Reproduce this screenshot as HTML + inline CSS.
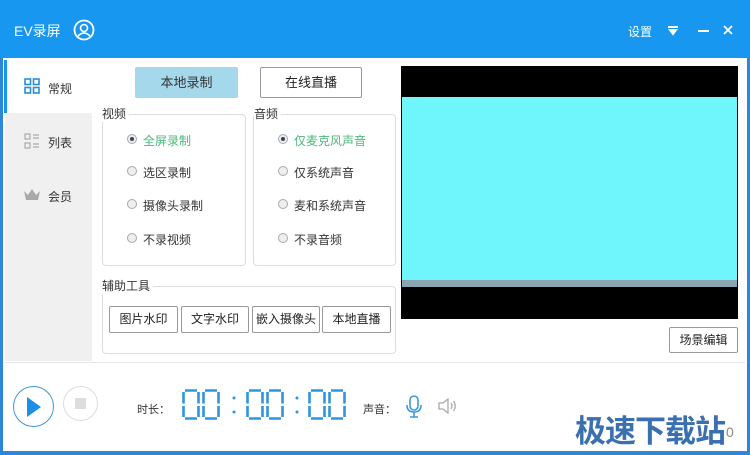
<!DOCTYPE html>
<html><head><meta charset="utf-8"><style>
*{margin:0;padding:0;box-sizing:border-box}
body{width:750px;height:455px;overflow:hidden;background:#2d86d8;font-family:"Liberation Sans","Noto Sans CJK SC",sans-serif;font-size:12px;color:#333;position:relative}
.a{position:absolute}
#win{left:3px;top:0;width:744px;height:451px;background:#fff}
#title{left:0;top:0;width:750px;height:58px;background:#1797ef}
.btn{position:absolute;border:1px solid #999;border-radius:2px;background:#fff;text-align:center;font-size:12px;color:#222}
.box{position:absolute;border:1px solid #ddd;border-radius:4px}
.r{position:absolute;width:10px;height:10px;border-radius:50%;border:1px solid #aaa;background:#eee}
.r.on::after{content:"";position:absolute;left:2px;top:2px;width:4px;height:4px;border-radius:50%;background:#345}
.lab{position:absolute;font-size:12px;color:#333}
</style></head><body>
<div class="a" id="win"></div>
<div class="a" id="title"></div>
<div class="a" style="left:14px;top:21px;color:#fff;font-size:14px">EV录屏</div>
<svg class="a" style="left:73px;top:19px" width="22" height="22" viewBox="0 0 22 22"><circle cx="11" cy="11" r="9.5" fill="none" stroke="#fff" stroke-width="1.8"/><circle cx="11" cy="9" r="3.5" fill="none" stroke="#fff" stroke-width="1.6"/><path d="M5 17 Q11 11 17 17" fill="none" stroke="#fff" stroke-width="1.6"/></svg>
<div class="a" style="left:628px;top:23px;color:#fff;font-size:12px">设置</div>
<svg class="a" style="left:667px;top:25px" width="12" height="12"><path d="M1 2h10M3 5h6l-3 4z" stroke="#fff" stroke-width="2" fill="#fff"/></svg>
<div class="a" style="left:698px;top:30px;width:11px;height:2px;background:#fff"></div>
<svg class="a" style="left:723px;top:25px" width="10" height="10"><path d="M1 1L9 9M9 1L1 9" stroke="#fff" stroke-width="1.8"/></svg>
<!-- sidebar -->
<div class="a" style="left:5px;top:58px;width:87px;height:303px;background:#f0f0f0"></div>
<div class="a" style="left:5px;top:58px;width:87px;height:55px;background:#fff"></div>
<div class="a" style="left:4px;top:60px;width:3px;height:53px;background:#1797ef"></div>
<svg class="a" style="left:24px;top:78px" width="16" height="16"><g fill="none" stroke="#2a8ed8" stroke-width="1.6"><rect x="1" y="1" width="5.5" height="5.5"/><rect x="9.5" y="1" width="5.5" height="5.5"/><rect x="1" y="9.5" width="5.5" height="5.5"/><rect x="9.5" y="9.5" width="5.5" height="5.5"/></g></svg>
<div class="a" style="left:48px;top:80px">常规</div>
<svg class="a" style="left:24px;top:133px" width="16" height="16"><g fill="none" stroke="#aaa" stroke-width="1.2"><rect x="1" y="1" width="5" height="5"/><rect x="1" y="10" width="5" height="5"/><path d="M9 2h6M9 5h6M9 11h6M9 14h6"/></g></svg>
<div class="a" style="left:48px;top:134px">列表</div>
<svg class="a" style="left:23px;top:188px" width="18" height="14"><path d="M1 3l4 4 4-6 4 6 4-4-2 9H3z" fill="#aaa"/></svg>
<div class="a" style="left:48px;top:188px">会员</div>
<!-- top buttons -->
<div class="a" style="left:135px;top:67px;width:103px;height:31px;background:#a6d8ec;border-radius:2px;text-align:center;line-height:31px;font-size:13px">本地录制</div>
<div class="btn" style="left:260px;top:67px;width:102px;height:31px;line-height:29px;font-size:13px">在线直播</div>
<!-- groups -->
<div class="box" style="left:102px;top:114px;width:144px;height:152px"></div>
<div class="lab" style="left:102px;top:105px;background:#fff;padding-right:3px">视频</div>
<div class="box" style="left:253px;top:114px;width:143px;height:152px"></div>
<div class="lab" style="left:254px;top:105px;background:#fff;padding-right:3px">音频</div>
<div class="r on" style="left:127px;top:134px"></div><div class="lab" style="left:143px;top:132px;color:#4cb87a">全屏录制</div>
<div class="r" style="left:127px;top:166px"></div><div class="lab" style="left:143px;top:164px">选区录制</div>
<div class="r" style="left:127px;top:199px"></div><div class="lab" style="left:143px;top:197px">摄像头录制</div>
<div class="r" style="left:127px;top:233px"></div><div class="lab" style="left:143px;top:231px">不录视频</div>
<div class="r on" style="left:278px;top:134px"></div><div class="lab" style="left:294px;top:132px;color:#4cb87a">仅麦克风声音</div>
<div class="r" style="left:278px;top:166px"></div><div class="lab" style="left:294px;top:164px">仅系统声音</div>
<div class="r" style="left:278px;top:199px"></div><div class="lab" style="left:294px;top:197px">麦和系统声音</div>
<div class="r" style="left:278px;top:233px"></div><div class="lab" style="left:294px;top:231px">不录音频</div>
<div class="box" style="left:102px;top:286px;width:294px;height:68px"></div>
<div class="lab" style="left:102px;top:277px;background:#fff;padding-right:3px">辅助工具</div>
<div class="btn" style="left:109px;top:306px;width:69px;height:27px;line-height:25px">图片水印</div>
<div class="btn" style="left:181px;top:306px;width:68px;height:27px;line-height:25px">文字水印</div>
<div class="btn" style="left:252px;top:306px;width:68px;height:27px;line-height:25px">嵌入摄像头</div>
<div class="btn" style="left:322px;top:306px;width:69px;height:27px;line-height:25px">本地直播</div>
<!-- preview -->
<div class="a" style="left:401px;top:66px;width:337px;height:253px;background:#000"></div>
<div class="a" style="left:402px;top:97px;width:335px;height:183px;background:#6ff6fc"></div>
<div class="a" style="left:402px;top:280px;width:335px;height:7px;background:#8aa4b0"></div>
<div class="btn" style="left:669px;top:327px;width:69px;height:26px;line-height:24px">场景编辑</div>
<div class="a" style="left:5px;top:362px;width:740px;height:1px;background:#e6e6e6"></div>
<!-- bottom -->
<div class="a" style="left:13px;top:386px;width:41px;height:41px;border-radius:50%;border:1.5px solid #3d9ad8"></div>
<svg class="a" style="left:26px;top:396px" width="16" height="22"><path d="M1 1L15 11L1 21z" fill="#1a8fe6"/></svg>
<div class="a" style="left:63px;top:386px;width:35px;height:35px;border-radius:50%;border:1px solid #ddd"></div>
<div class="a" style="left:75px;top:398px;width:11px;height:11px;background:#ddd"></div>
<div class="a" style="left:137px;top:401px;font-size:11px">时长：</div>
<svg class="a" style="left:180px;top:389px" width="172" height="32" viewBox="0 0 172 32">
<defs><g id="z" fill="none" stroke="#2f95dc" stroke-width="2.6"><path d="M3 1.5h12M3 29.5h12M1.5 3v11.5M1.5 17v11M16.5 3v11.5M16.5 17v11"/></g></defs>
<use href="#z" x="2"/><use href="#z" x="22"/>
<use href="#z" x="66"/><use href="#z" x="86"/>
<use href="#z" x="128"/><use href="#z" x="148"/>
<g fill="#2f95dc"><circle cx="54" cy="9" r="1.5"/><circle cx="54" cy="23" r="1.5"/><circle cx="117" cy="9" r="1.5"/><circle cx="117" cy="23" r="1.5"/></g>
</svg>
<div class="a" style="left:363px;top:401px;font-size:11px">声音：</div>
<svg class="a" style="left:405px;top:395px" width="18" height="24"><g fill="none" stroke="#3d9ad8" stroke-width="1.6"><rect x="5" y="1" width="8" height="14" rx="4"/><path d="M2 10q0 7 7 7t7-7M9 17v5M5 22h8"/></g></svg>
<svg class="a" style="left:438px;top:398px" width="20" height="16"><g fill="none" stroke="#aaa" stroke-width="1.3"><path d="M1 5h4l5-4v14l-5-4H1z"/><path d="M13 5q2 3 0 6M15.5 3q3.5 5 0 10"/></g></svg>
<div class="a" style="left:575px;top:406px;font-size:31px;font-weight:bold;color:#3a6fb0;letter-spacing:-1px;text-shadow:0 0 2px #fff">极速下载站</div>
<div class="a" style="left:726px;top:424px;font-size:14px;color:#888">0</div>
</body></html>
